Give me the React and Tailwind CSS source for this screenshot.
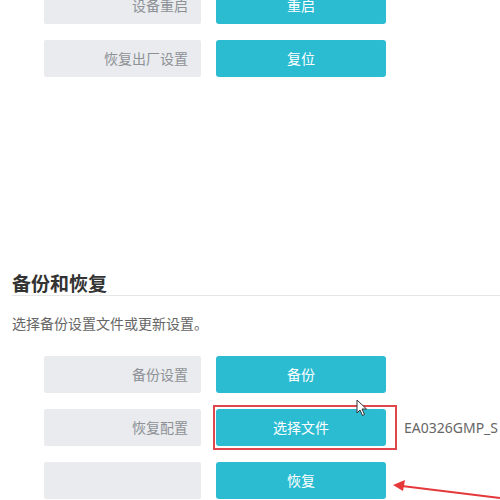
const font = { fontFamily: '"Noto Sans CJK SC", "Noto Sans", sans-serif' };

const Row = ({ label, btn, children, highlight }) => (
  <div className="flex items-center gap-[15px]">
    <div className="shrink-0 w-[157px] h-[37px] bg-[#e9ebee] rounded-[2px] flex items-center justify-end pr-[13px] text-[14px] text-[#8e9196]">
      {label}
    </div>
    <div className={highlight ? "relative shrink-0" : "shrink-0"}>
      <button className="w-[170px] h-[37px] bg-[#2bbcd2] rounded-[3px] text-white text-[14px] flex items-center justify-center">
        {btn}
      </button>
      {highlight && (
        <div className="absolute left-[-3px] top-[-4px] w-[184px] h-[45px] border-2 border-[#e0474c] pointer-events-none" />
      )}
    </div>
    {children}
  </div>
);

export default function App() {
  return (
    <div className="relative w-[500px] h-[500px] overflow-hidden bg-white" style={font}>
      <div className="pl-[44px] flex flex-col gap-[16px] mt-[-13px]">
        <Row label="设备重启" btn="重启" />
        <Row label="恢复出厂设置" btn="复位" />
      </div>

      <div className="mt-[194px] pl-[12px]">
        <h2 className="text-[19px] font-bold text-[#333] leading-[24px]">备份和恢复</h2>
        <div className="h-px bg-[#e6e6e6]" />
        <p className="mt-[17px] text-[14px] text-[#666] leading-[20px]">选择备份设置文件或更新设置。</p>
      </div>

      <div className="pl-[44px] flex flex-col gap-[16px] mt-[23px]">
        <Row label="备份设置" btn="备份" />
        <Row label="恢复配置" btn="选择文件" highlight>
          <span className="ml-[3px] text-[14px] text-[#666] whitespace-nowrap" style={{ fontFamily: '"Noto Sans", sans-serif' }}>
            EA0326GMP_S
          </span>
        </Row>
        <Row label="" btn="恢复" />
      </div>

      {/* mouse cursor */}
      <svg className="absolute left-[356px] top-[399px]" width="12" height="18" viewBox="0 0 12 18">
        <path d="M1 1 L1 14 L4 11 L6.5 16.5 L8.5 15.5 L6 10 L10.5 10 Z" fill="#fff" stroke="#333" strokeWidth="1" strokeLinejoin="round" />
      </svg>

      {/* red arrow */}
      <svg className="absolute left-0 top-0 pointer-events-none" width="500" height="500">
        <line x1="500" y1="498" x2="402" y2="486" stroke="#e5383b" strokeWidth="2" />
        <polygon points="393,485 405,480 403,491" fill="#e5383b" />
      </svg>
    </div>
  );
}
